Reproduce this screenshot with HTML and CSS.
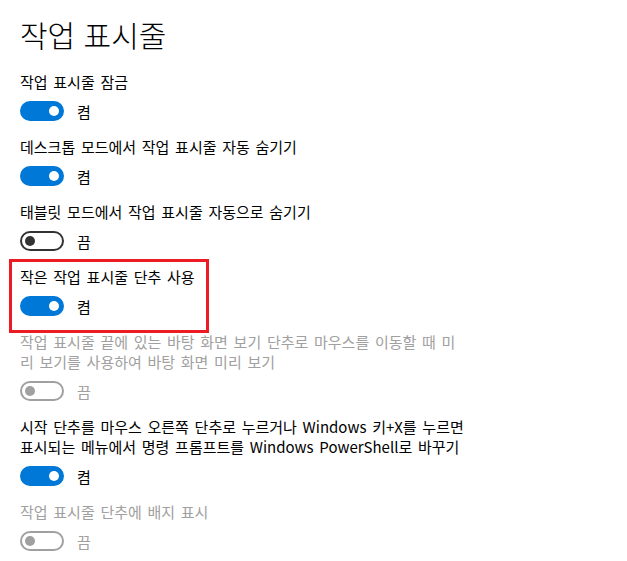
FILE: index.html
```html
<!DOCTYPE html>
<html lang="ko">
<head>
    <meta charset="UTF-8">
    <meta name="viewport" content="width=device-width, initial-scale=1.0">
    <title>작업 표시줄</title>
    <link rel="stylesheet" href="styles.css">
</head>
<body>

    <section class="settings">
        <!-- Page title -->
        <h1 class="title">작업 표시줄</h1>

        <div class="setting">
            <p class="label">작업 표시줄 잠금</p>
            <div class="switch-row">
                <span class="toggle on"></span>
                <span class="state">켬</span>
            </div>
        </div>

        <div class="setting">
            <p class="label">데스크톱 모드에서 작업 표시줄 자동 숨기기</p>
            <div class="switch-row">
                <span class="toggle on"></span>
                <span class="state">켬</span>
            </div>
        </div>

        <div class="setting">
            <p class="label">태블릿 모드에서 작업 표시줄 자동으로 숨기기</p>
            <div class="switch-row">
                <span class="toggle"></span>
                <span class="state">끔</span>
            </div>
        </div>

        <!-- Highlighted option -->
        <div class="setting marked">
            <p class="label">작은 작업 표시줄 단추 사용</p>
            <div class="switch-row">
                <span class="toggle on"></span>
                <span class="state">켬</span>
            </div>
        </div>

        <div class="setting disabled">
            <p class="label">작업 표시줄 끝에 있는 바탕 화면 보기 단추로 마우스를 이동할 때 미<br>리 보기를 사용하여 바탕 화면 미리 보기</p>
            <div class="switch-row">
                <span class="toggle"></span>
                <span class="state">끔</span>
            </div>
        </div>

        <div class="setting">
            <p class="label">시작 단추를 마우스 오른쪽 단추로 누르거나 Windows 키+X를 누르면<br>표시되는 메뉴에서 명령 프롬프트를 Windows PowerShell로 바꾸기</p>
            <div class="switch-row">
                <span class="toggle on"></span>
                <span class="state">켬</span>
            </div>
        </div>

        <div class="setting disabled">
            <p class="label">작업 표시줄 단추에 배지 표시</p>
            <div class="switch-row">
                <span class="toggle"></span>
                <span class="state">끔</span>
            </div>
        </div>
    </section>

</body>
</html>
```

FILE: styles.css
```css
/* reset */
*{
    margin: 0;
    padding: 0;
    box-sizing: border-box;
}

body{
    background: #fff;
    color: #000;
    font-family: "Noto Sans CJK KR", "Noto Sans", sans-serif;
    font-size: 15px;
}

.settings{
    padding: 0 0 0 20px;
}

/* Page title */
.title{
    font-size: 30px;
    font-weight: 300;
    line-height: 36px;
    padding-top: 16px;
    margin-bottom: 20px;
}

.setting{
    padding-bottom: 16px;
}

.label{
    line-height: 20px;
    word-spacing: 1.5px;
    margin-bottom: 9px;
}

.switch-row{
    display: flex;
    align-items: center;
    gap: 13px;
    height: 20px;
}

/* Toggle switch */
.toggle{
    position: relative;
    width: 44px;
    height: 20px;
    border: 2px solid #333;
    border-radius: 10px;
}
.toggle::after{
    content: "";
    position: absolute;
    top: 3px;
    left: 3px;
    width: 10px;
    height: 10px;
    border-radius: 50%;
    background: #333;
}
.toggle.on{
    background: #0078d7;
    border-color: #0078d7;
}
.toggle.on::after{
    left: auto;
    right: 3px;
    background: #fff;
}

/* Greyed out options */
.disabled{
    color: #a0a0a0;
}
.disabled .toggle{
    border-color: #a0a0a0;
}
.disabled .toggle::after{
    background: #a0a0a0;
}

/* Red annotation box */
.marked{
    position: relative;
}
.marked::before{
    content: "";
    position: absolute;
    top: -8px;
    left: -11px;
    width: 194px;
    height: 68px;
    border: 3px solid #ed1c24;
}
```
